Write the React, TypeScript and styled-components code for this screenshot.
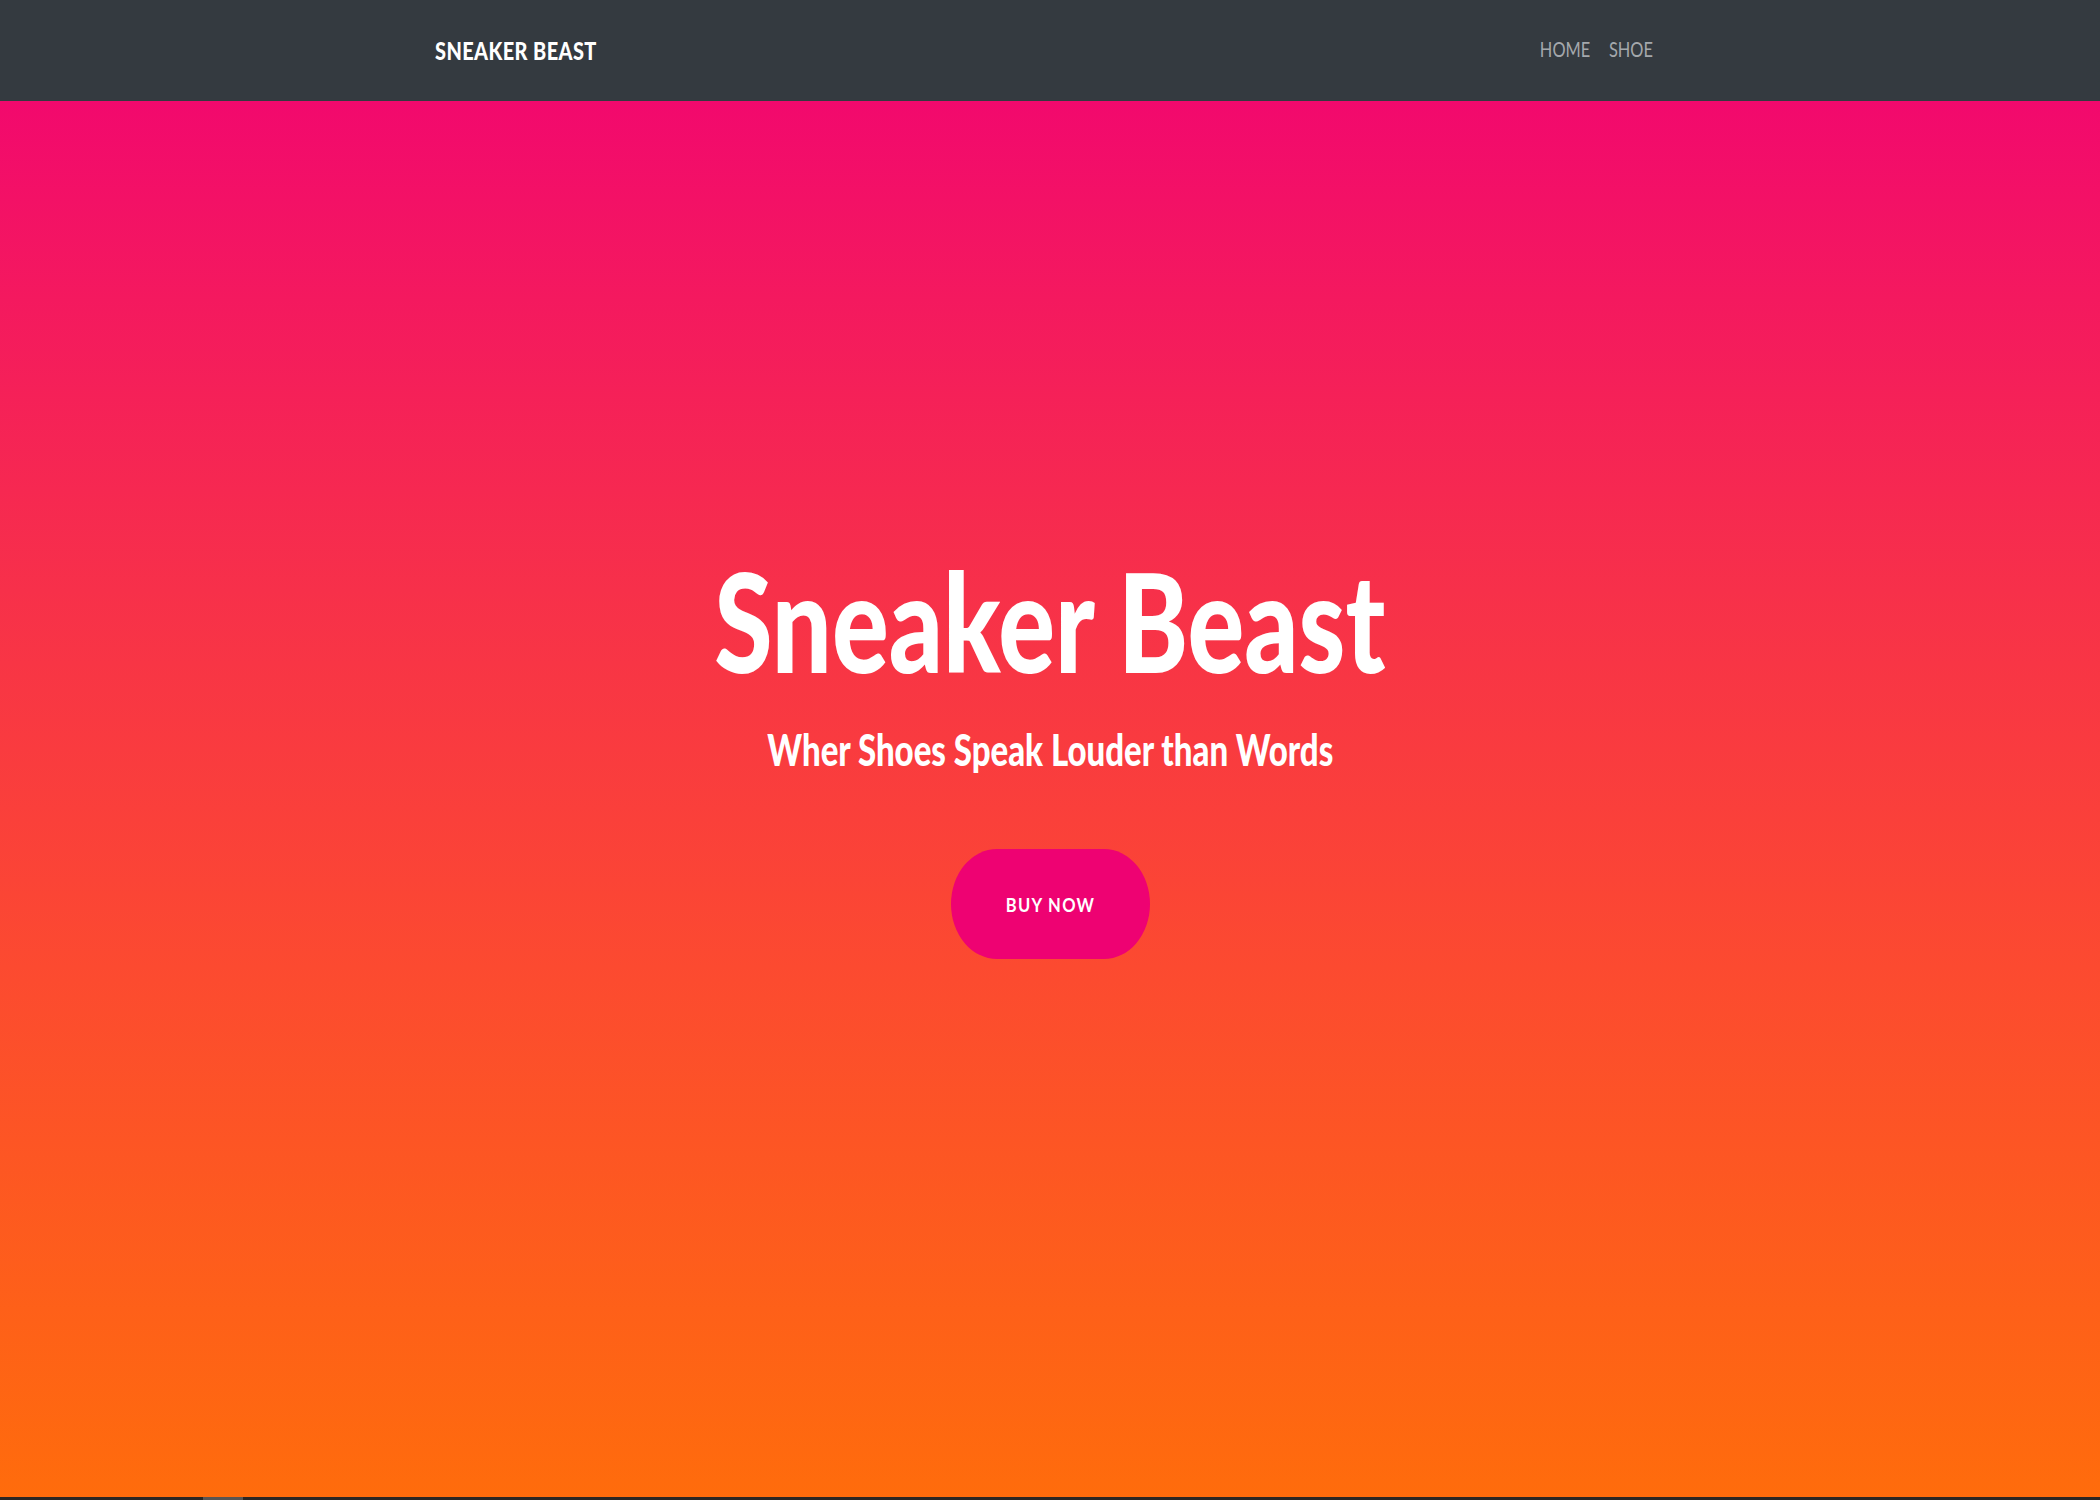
import React from "react";
import styled, { createGlobalStyle } from "styled-components";

const GlobalStyle = createGlobalStyle`
  html, body {
    margin: 0;
    padding: 0;
    background: #2b2724;
  }
  body {
    font-family: Lato, "Open Sans", "Liberation Sans", sans-serif;
  }
  * { box-sizing: border-box; }
`;

const Page = styled.div`
  display: flex;
  flex-direction: column;
  height: 1500px;
  overflow: hidden;
`;

const Navbar = styled.nav`
  flex: 0 0 101px;
  background: #343a40;
  display: flex;
  justify-content: center;
`;

const NavInner = styled.div`
  width: 1230px;
  display: flex;
  align-items: center;
  justify-content: space-between;
`;

const Brand = styled.a`
  display: inline-block;
  color: #ffffff;
  font-family: Lato, "Liberation Sans", sans-serif;
  font-weight: 900;
  font-size: 24px;
  letter-spacing: 0.5px;
  text-decoration: none;
  transform: scaleX(0.83);
  transform-origin: left center;
`;

const NavLinks = styled.ul`
  list-style: none;
  margin: 0;
  padding: 0;
  display: flex;
  gap: 24px;
  transform: scaleX(0.78);
  transform-origin: right center;
  margin-right: 12px;
  margin-top: -4px;
`;

const NavLink = styled.a`
  color: #a4a8ac;
  font-family: Lato, "Liberation Sans", sans-serif;
  font-size: 21px;
  font-weight: 400;
  text-decoration: none;
  text-transform: uppercase;
`;

const Hero = styled.section`
  flex: 1 1 auto;
  background: linear-gradient(180deg, #f2096d 0%, #f7304a 35%, #fc4a30 62%, #ff6c0c 100%);
  display: flex;
  flex-direction: column;
  align-items: center;
  padding-top: 450px;
`;

const Title = styled.h1`
  margin: 0;
  color: #ffffff;
  font-family: Lato, "Liberation Sans", sans-serif;
  font-weight: 900;
  font-size: 138px;
  line-height: 138px;
  white-space: nowrap;
  transform: scaleX(0.768);
`;

const Subtitle = styled.h3`
  margin: 34px 0 0;
  color: #ffffff;
  font-family: Lato, "Liberation Sans", sans-serif;
  font-weight: 900;
  font-size: 44px;
  line-height: 1.2;
  white-space: nowrap;
  transform: scaleX(0.75);
`;

const BuyButton = styled.button`
  margin-top: 73px;
  width: 199px;
  height: 110px;
  border: none;
  border-radius: 46px / 55px;
  background: #ee0272;
  color: #ffffff;
  cursor: pointer;
  display: flex;
  align-items: center;
  justify-content: center;
  padding: 0;
`;

const ButtonLabel = styled.span`
  display: inline-block;
  font-family: Lato, "Liberation Sans", sans-serif;
  font-weight: 700;
  font-size: 19px;
  letter-spacing: 1.5px;
  transform: scaleX(0.87);
  margin-top: 2px;
`;

const ScrollStrip = styled.div`
  flex: 0 0 3px;
  background: #2b2724;
  display: flex;
  padding-left: 203px;
`;

const ScrollThumb = styled.div`
  width: 40px;
  background: #5a5552;
`;

export default function App() {
  return (
    <>
      <GlobalStyle />
      <Page>
        <Navbar>
          <NavInner>
            <Brand href="#">SNEAKER BEAST</Brand>
            <NavLinks>
              <li>
                <NavLink href="#">Home</NavLink>
              </li>
              <li>
                <NavLink href="#">Shoe</NavLink>
              </li>
            </NavLinks>
          </NavInner>
        </Navbar>
        <Hero>
          <Title>Sneaker Beast</Title>
          <Subtitle>Wher Shoes Speak Louder than Words</Subtitle>
          <BuyButton>
            <ButtonLabel>BUY NOW</ButtonLabel>
          </BuyButton>
        </Hero>
        <ScrollStrip>
          <ScrollThumb />
        </ScrollStrip>
      </Page>
    </>
  );
}
